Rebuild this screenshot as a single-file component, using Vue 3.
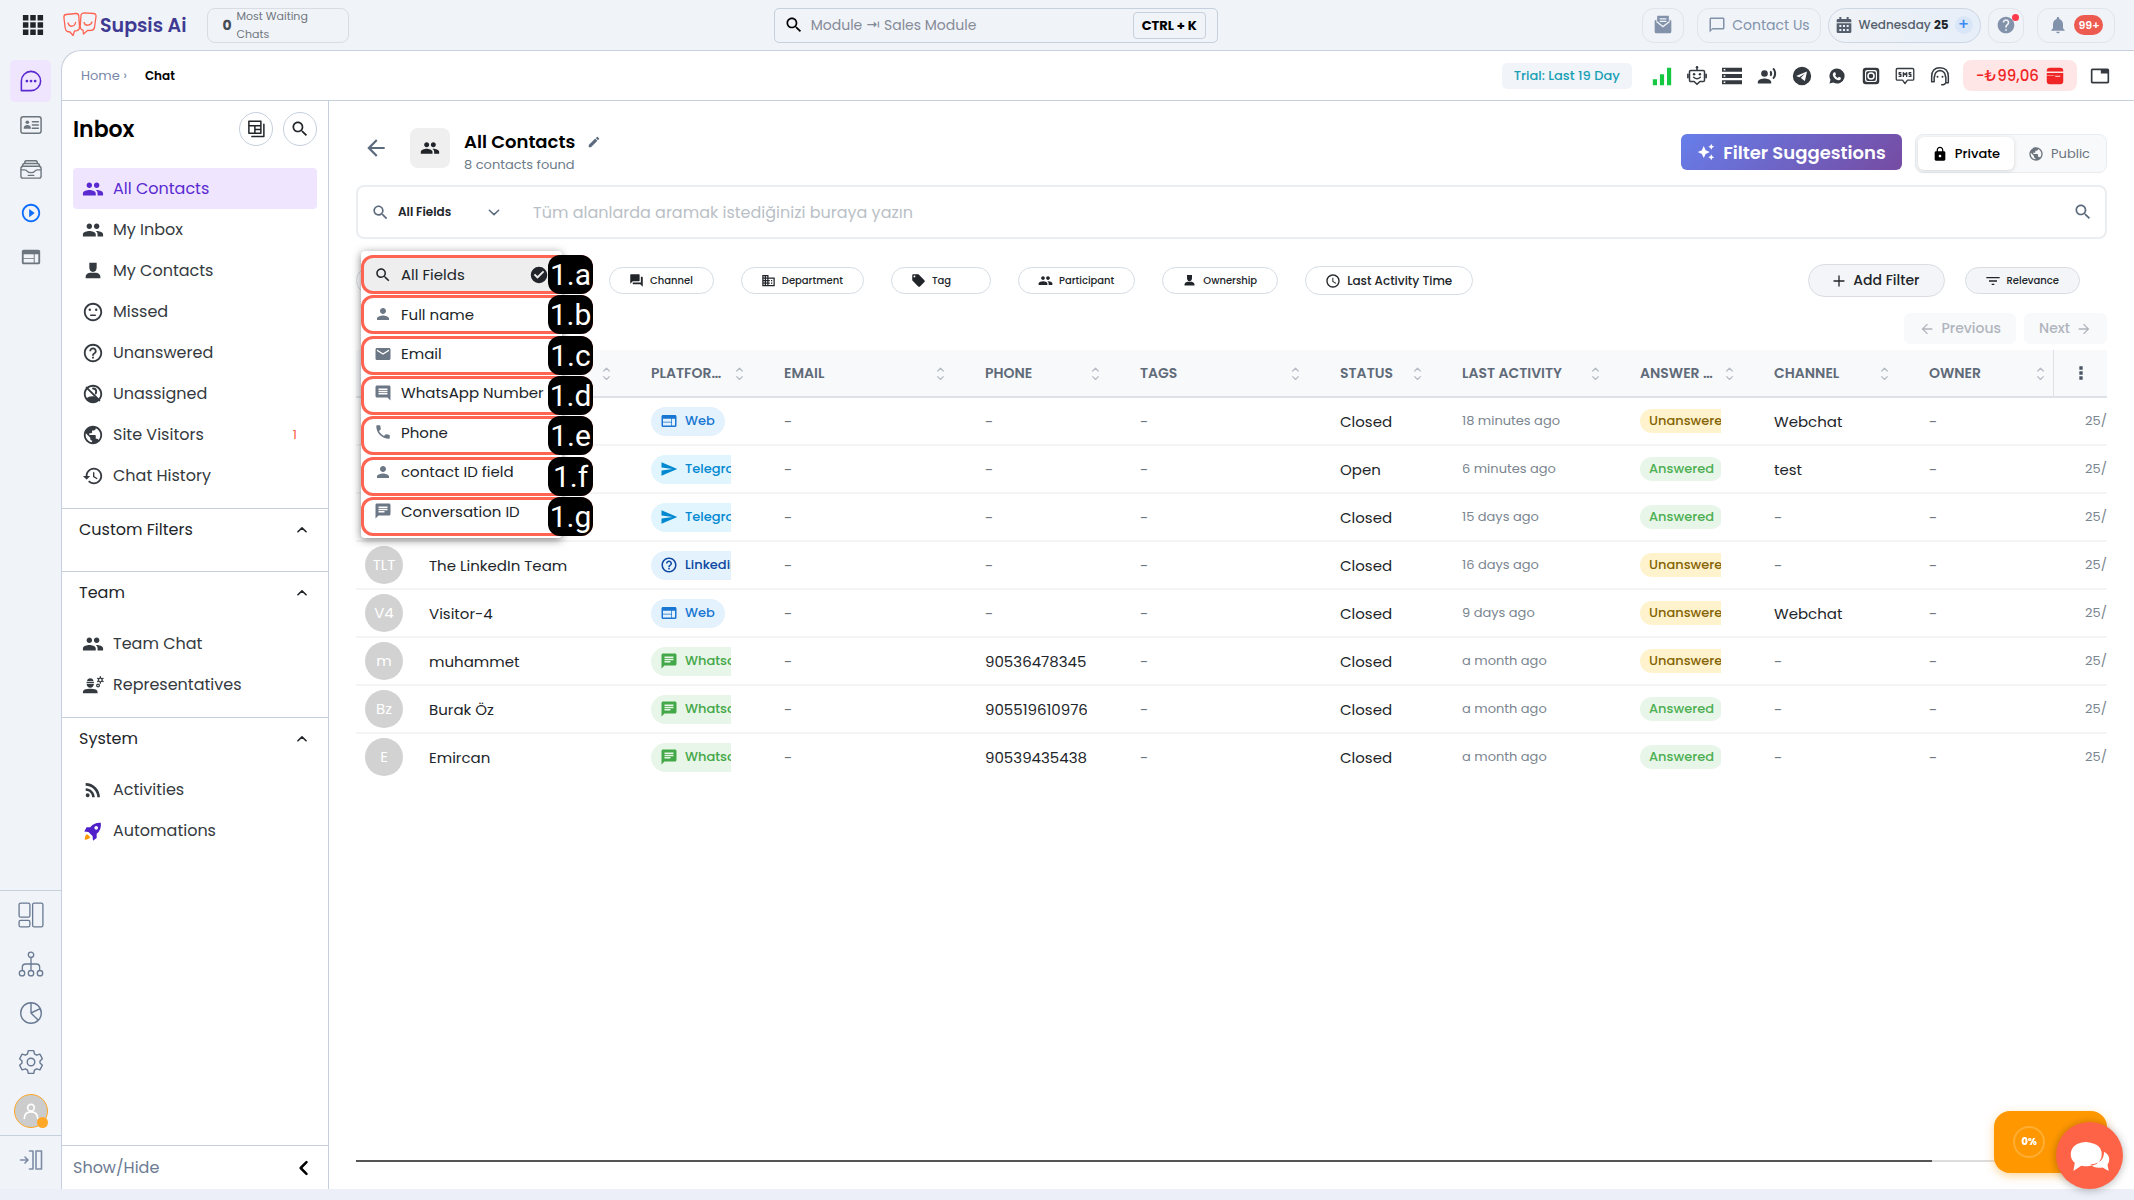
<template>
  <div class="app">
    <header class="topbar">
      <div class="brand">
        <button class="plain" aria-label="Apps"><Icon name="apps" :size="22" /></button>
        <a href="#" class="logo">
          <Icon name="logo" :size="34" box="0 0 34 26" />
          <span>Supsis Ai</span>
        </a>
        <div class="waiting">
          <strong>0</strong>
          <span>Most Waiting<br />Chats</span>
        </div>
      </div>

      <label class="module-search">
        <Icon name="search" :size="20" />
        <input type="text" placeholder="Module ⇥ Sales Module" aria-label="Module search" />
        <kbd>CTRL + K</kbd>
      </label>

      <div class="top-actions">
        <button class="top-btn mail" aria-label="Mail"><Icon name="drafts" :size="20" /></button>
        <button class="top-btn contact"><Icon name="bubble" :size="18" />Contact Us</button>
        <button class="top-btn day">
          <Icon name="calendar" :size="16" />
          <span>Wednesday <b>25</b></span>
          <i>+</i>
        </button>
        <button class="top-btn help" aria-label="Help"><Icon name="help" :size="20" /></button>
        <button class="top-btn bell">
          <Icon name="bell" :size="20" />
          <em>99+</em>
        </button>
      </div>
    </header>

    <div class="body">
      <nav class="rail">
        <div class="rail-top">
          <button
            v-for="item in railTop"
            :key="item.icon"
            class="rail-btn"
            :class="item.icon"
            :aria-label="item.label"
          >
            <Icon :name="item.icon" :size="22" />
          </button>
        </div>
        <div class="rail-bottom">
          <button v-for="item in railBottom" :key="item.icon" class="plain" :aria-label="item.label">
            <Icon :name="item.icon" :size="26" />
          </button>
          <button class="me" aria-label="Profile"><Icon name="user" :size="20" /></button>
        </div>
        <button class="rail-toggle" aria-label="Expand menu"><Icon name="expand" :size="24" /></button>
      </nav>

      <main class="panel">
        <div class="crumbs">
          <div class="path">
            <a href="#">Home ›</a>
            <b>Chat</b>
          </div>
          <div class="tools">
            <span class="trial">Trial: Last 19 Day</span>
            <button
              v-for="tool in tools"
              :key="tool"
              class="tool"
              :class="tool"
              :aria-label="tool"
            >
              <Icon :name="tool" :size="tool === 'instagram' ? 18 : 20" />
            </button>
            <button class="balance">-₺99,06 <Icon name="wallet" :size="18" /></button>
            <button class="tool" aria-label="Tab"><Icon name="tab" :size="20" /></button>
          </div>
        </div>

        <div class="columns">
          <aside class="sidebar">
            <div class="inbox-head">
              <h2>Inbox</h2>
              <button class="round" aria-label="Views"><Icon name="views" :size="18" /></button>
              <button class="round" aria-label="Search"><Icon name="search" :size="20" /></button>
            </div>
            <div class="links">
              <a
                v-for="link in inboxLinks"
                :key="link.label"
                href="#"
                class="link"
                :class="{ active: link.active }"
              >
                <Icon :name="link.icon" :size="22" />
                <span>{{ link.label }}</span>
                <small v-if="link.count">{{ link.count }}</small>
              </a>
            </div>
            <section v-for="group in groups" :key="group.title" class="group">
              <button class="group-title">
                {{ group.title }}
                <Icon name="up" :size="14" />
              </button>
              <div v-if="group.links.length" class="links">
                <a v-for="link in group.links" :key="link.label" href="#" class="link">
                  <Icon :name="link.icon" :size="22" />
                  <span>{{ link.label }}</span>
                </a>
              </div>
            </section>
            <button class="show-hide">
              Show/Hide
              <Icon name="left" :size="20" />
            </button>
          </aside>

          <section class="content">
            <div class="head">
              <button class="plain back" aria-label="Back"><Icon name="back" :size="26" /></button>
              <span class="head-icon"><Icon name="people" :size="20" /></span>
              <div class="head-text">
                <h1>All Contacts <Icon name="edit" :size="14" /></h1>
                <p>8 contacts found</p>
              </div>
              <div class="head-right">
                <button class="suggest"><Icon name="sparkle" :size="18" />Filter Suggestions</button>
                <div class="toggle">
                  <button class="on"><Icon name="lock" :size="16" />Private</button>
                  <button><Icon name="public" :size="16" />Public</button>
                </div>
              </div>
            </div>

            <div class="search-wrap">
              <div class="search">
                <button class="field-select" aria-haspopup="listbox" aria-expanded="true">
                  <Icon name="search" :size="19" />
                  <span>All Fields</span>
                  <Icon name="down" :size="14" />
                </button>
                <input
                  type="text"
                  aria-label="Search contacts"
                  placeholder="Tüm alanlarda aramak istediğinizi buraya yazın"
                />
                <button class="plain go" aria-label="Search"><Icon name="search" :size="20" /></button>
              </div>

              <ul class="menu" role="listbox">
                <li
                  v-for="(field, i) in fields"
                  :key="field.label"
                  role="option"
                  :class="{ chosen: i === 0 }"
                >
                  <Icon :name="field.icon" :size="18" />
                  <span>{{ field.label }}</span>
                  <Icon v-if="i === 0" name="check" :size="18" class="tick" />
                </li>
              </ul>
              <div class="marks">
                <div v-for="field in fields" :key="field.mark" class="mark">
                  <b>{{ field.mark }}</b>
                </div>
              </div>
            </div>

            <div class="filters">
              <button class="chip first" aria-label="Status"></button>
              <button v-for="chip in chips" :key="chip.label" class="chip" :class="chip.size">
                <Icon :name="chip.icon" :size="chip.size ? 16 : 15" />{{ chip.label }}
              </button>
              <button class="add"><Icon name="plus" :size="12" />Add Filter</button>
              <button class="chip relevance"><Icon name="filter" :size="16" />Relevance</button>
            </div>

            <div class="pager">
              <button disabled><Icon name="back" :size="16" />Previous</button>
              <button disabled>Next<Icon name="forward" :size="16" /></button>
            </div>

            <div class="table-wrap">
              <table>
                <colgroup>
                  <col v-for="col in columns" :key="col.key" :style="{ width: col.width + 'px' }" />
                </colgroup>
                <thead>
                  <tr>
                    <th v-for="col in columns" :key="col.key">
                      <div class="th">
                        <span>{{ col.label }}</span>
                        <Icon name="sort" :size="15" />
                      </div>
                    </th>
                  </tr>
                </thead>
                <tbody>
                  <tr v-for="(row, i) in rows" :key="i">
                    <td class="name">
                      <div v-if="row.name" class="person">
                        <span class="avatar">{{ row.initials }}</span>{{ row.name }}
                      </div>
                    </td>
                    <td>
                      <div class="cell">
                        <span class="platform" :class="row.platform">
                          <Icon :name="platforms[row.platform].icon" :size="18" />
                          {{ platforms[row.platform].label }}
                        </span>
                      </div>
                    </td>
                    <td class="dim">-</td>
                    <td :class="{ dim: !row.phone }">
                      <div class="cell">{{ row.phone || "-" }}</div>
                    </td>
                    <td class="dim">-</td>
                    <td>{{ row.status }}</td>
                    <td class="small">{{ row.last }}</td>
                    <td>
                      <div class="cell">
                        <span class="answer" :class="{ yes: row.answered }">
                          {{ row.answered ? "Answered" : "Unanswered" }}
                        </span>
                      </div>
                    </td>
                    <td :class="{ dim: !row.channel }">{{ row.channel || "-" }}</td>
                    <td class="dim">-</td>
                    <td class="small">25/</td>
                  </tr>
                </tbody>
              </table>
              <button class="col-menu" aria-label="Columns"><Icon name="more" :size="20" /></button>
            </div>

            <div class="scrollbar"><div></div></div>
          </section>
        </div>
      </main>
    </div>

    <div class="progress-card"><span>0%</span></div>
    <button class="chat-fab" aria-label="Live chat"><Icon name="chats" :size="42" /></button>
  </div>
</template>

<script setup>
import { h } from "vue";

const line = (d, w = 1.5) =>
  `<path fill="none" stroke="currentColor" stroke-width="${w}" stroke-linecap="round" stroke-linejoin="round" d="${d}"/>`;
const solid = (d) => `<path fill-rule="evenodd" d="${d}"/>`;

const ring =
  "M12 2C6.48 2 2 6.48 2 12s4.48 10 10 10 10-4.48 10-10S17.52 2 12 2zm0 18c-4.41 0-8-3.59-8-8s3.59-8 8-8 8 3.59 8 8-3.59 8-8 8z";

const icons = {
  apps: solid(
    "M1 1h6v6H1zM9 1h6v6H9zM17 1h6v6h-6zM1 9h6v6H1zM9 9h6v6H9zM17 9h6v6h-6zM1 17h6v6H1zM9 17h6v6H9zM17 17h6v6h-6z"
  ),
  logo: line(
    "M3 2.500L13 1.500Q15.500 1.300 15.800 4L16.500 15Q16.500 18 14 18.600L11.500 19L10 23.500L7 20L4.500 19.500Q2.700 19 2.200 16L.900 5.500Q.700 2.800 3 2.500zM18 3Q18.500.900 21 .800L30.500 1.500Q33.300 1.800 33 4.500L31.500 15.500Q31 18 28.500 18.300L24.500 18.500L20.500 22L20 18.200Q17.300 17.500 17.200 14.500zM5 11Q6 14.500 9 14.200Q12 13.800 12.600 10.500M21 10.500Q22 13.500 25 13.200Q28 12.800 29 10",
    1.3
  ),
  search: solid(
    "M15.500 14h-.79l-.28-.27C15.410 12.590 16 11.110 16 9.500 16 5.910 13.090 3 9.500 3S3 5.910 3 9.500 5.910 16 9.500 16c1.610 0 3.090-.59 4.230-1.570l.27.28v.79l5 4.990L20.490 19l-4.990-5zm-6 0C7.010 14 5 11.990 5 9.500S7.010 5 9.500 5 14 7.010 14 9.500 11.990 14 9.500 14z"
  ),
  drafts: solid(
    "M5 1h14v6.500L12 13 5 7.500zM8 4v1.500h8V4zm0 3v1.500h8V7zM2 7l2-1.500v3.200l8 6.300 8-6.300V5.500L22 7v13q0 2-2 2H4q-2 0-2-2z"
  ),
  bubble: solid("M20 2H4c-1.100 0-2 .9-2 2v18l4-4h14c1.100 0 2-.9 2-2V4c0-1.100-.9-2-2-2zm0 14H6l-2 2V4h16v12z"),
  calendar: solid(
    "M5 0h3v3h8V0h3v3h2q2 0 2 2v3H1V5q0-2 2-2h2zM1 9.500h22V22q0 2-2 2H3q-2 0-2-2zM5 12v3h3v-3zm5.500 0v3h3v-3zm5.500 0v3h3v-3zM5 18v3h3v-3zm5.500 0v3h3v-3zm5.500 0v3h3v-3z"
  ),
  help: solid(
    "M12 2C6.480 2 2 6.480 2 12s4.480 10 10 10 10-4.480 10-10S17.520 2 12 2zm1 17h-2v-2h2v2zm2.070-7.750l-.9.920C13.450 12.900 13 13.500 13 15h-2v-.5c0-1.100.45-2.100 1.170-2.830l1.240-1.260c.37-.36.59-.86.59-1.410 0-1.100-.9-2-2-2s-2 .9-2 2H8c0-2.210 1.790-4 4-4s4 1.790 4 4c0 .88-.36 1.680-.93 2.250z"
  ),
  bell: solid(
    "M12 22c1.100 0 2-.9 2-2h-4c0 1.100.89 2 2 2zm6-6v-5c0-3.070-1.640-5.640-4.500-6.320V4c0-.83-.67-1.500-1.500-1.500s-1.500.67-1.500 1.500v.68C7.630 5.360 6 7.920 6 11v5l-2 2v1h16v-1l-2-2z"
  ),
  chat: line("M1.500 22.500V12A10.500 10.500 0 1 1 12 22.500z", 1.7) +
    '<circle cx="7.500" cy="12" r="1.500"/><circle cx="12" cy="12" r="1.500"/><circle cx="16.500" cy="12" r="1.500"/>',
  card: line("M3.500 3h17q2.500 0 2.500 2.500v13q0 2.500-2.500 2.500h-17Q1 21 1 18.500v-13Q1 3 3.500 3zM13.500 8.500H20M13.500 12H20M13.500 15.500H20", 1.6) +
    '<circle cx="8" cy="9" r="2"/><path d="M4 16q0-4 4-4t4 4z"/>',
  inbox: line("M3.500 9h17q2.500 0 2.500 2.500v8q0 2.500-2.500 2.500h-17Q1 22 1 19.500v-8Q1 9 3.500 9zM2.500 9Q3 6 5 6h14q2 0 2.500 3M5 6q0-3 2-3h10q2 0 2 3M1.500 13H5q2 0 3 1.500T12 16t4-1.500 3-1.500h3.500M9 19h6", 1.5),
  play: solid("M10 16.500l6-4.500-6-4.500v9z" + ring),
  web: solid(
    "M20 4H4c-1.100 0-1.990.9-1.990 2L2 18c0 1.100.9 2 2 2h16c1.100 0 2-.9 2-2V6c0-1.100-.9-2-2-2zm-5 14H4v-4h11v4zm0-5H4V9h11v4zm5 5h-4V9h4v9z"
  ),
  dashboard: line("M2.500 1h7q1.500 0 1.500 1.500v10q0 1.500-1.500 1.500h-7Q1 14 1 12.500v-10Q1 1 2.500 1zM2.500 17h7q1.500 0 1.500 1.500v3q0 1.500-1.500 1.500h-7Q1 23 1 21.500v-3Q1 17 2.500 17zM15 1h6.500Q23 1 23 2.500v19q0 1.500-1.500 1.500H15q-1.500 0-1.500-1.500v-19Q13.500 1 15 1z", 1.2),
  org: line("M12 6v12M4 17.500V15q0-3 3-3h10q3 0 3 3v2.500M9.500 3.500a2.500 2.500 0 1 0 5 0a2.500 2.500 0 1 0-5 0M9.500 20.500a2.500 2.500 0 1 0 5 0a2.500 2.500 0 1 0-5 0M1.200 20.500a2.500 2.500 0 1 0 5 0a2.500 2.500 0 1 0-5 0M17.800 20.500a2.500 2.500 0 1 0 5 0a2.500 2.500 0 1 0-5 0", 1.2),
  pie: line("M2.500 12a9.500 9.500 0 1 0 19 0a9.500 9.500 0 1 0-19 0M12 2.500V12L20.500 8M12 12l6.500 6.500", 1.3),
  gear: line("M8.500 12a3.500 3.500 0 1 0 7 0a3.500 3.500 0 1 0-7 0M9.500 1.500h5l.7 3 2 1.200 3-.9 2.300 4.200-2.200 2v2l2.200 2-2.300 4.200-3-.9-2 1.200-.7 3h-5l-.7-3-2-1.200-3 .9L1.500 15l2.200-2v-2L1.500 9l2.300-4.200 3 .9 2-1.200z", 1.3),
  user: line("M8 8a4 4 0 1 0 8 0a4 4 0 1 0-8 0M4 21q0-8 8-8t8 8", 2),
  expand: line("M1.500 12h7M6 9l3 3-3 3M10.500 3H14v18h-3.500M17 3h5.500v18H17z", 1.6),
  bars: solid("M1 16h5v7H1zM9.500 10h5v13h-5zM18 2h5v21h-5z"),
  bot: line("M4.500 5.500h15q1.500 0 1.500 1.500v10q0 1.500-1.500 1.500h-4L12 22l-3.500-3.500h-4Q3 18.500 3 17V7q0-1.500 1.500-1.500zM12 5V1.500M1 10v4M23 10v4M8 13.500q4 3.500 8 0", 1.8) +
    '<circle cx="8.500" cy="10" r="1.500"/><circle cx="15.500" cy="10" r="1.500"/><circle cx="12" cy="1.500" r="1.500"/>',
  servers: solid(
    "M0 2h24v5H0zM2 3.500v2h2v-2zM0 9.500h24v5H0zM2 11v2h2v-2zM0 17h24v5H0zM2 18.500v2h2v-2z"
  ),
  voice: solid(
    "M5 9a4 4 0 1 0 8 0a4 4 0 1 0-8 0zM9 15c-2.670 0-8 1.340-8 4v2h16v-2c0-2.660-5.330-4-8-4zm7.760-9.640l-1.680 1.690c.84 1.180.84 2.710 0 3.890l1.680 1.690c2.020-2.020 2.020-5.070 0-7.270zM20.070 2l-1.630 1.630c2.770 3.020 2.770 7.560 0 10.740L20.070 16c3.900-3.890 3.910-9.950 0-14z"
  ),
  telegram: solid("M12 1a11 11 0 1 0 0 22a11 11 0 1 0 0-22zM18 6.500L5 12l3.800 1.500L15.500 9l-5 5.500 5 3.500z"),
  whatsapp: solid(
    "M12 3a9 9 0 0 0-7.800 13.500L3 21l4.600-1.200A9 9 0 1 0 12 3zM8.500 7.500l1.300.1 1 2.400-1 1.300q1 2 3.200 3l1.200-1.300 2.400 1.200v1.300q-.9 1.800-3.200 1.600-5.400-1.300-6.500-6.500Q6.900 8.500 8.500 7.500z"
  ),
  instagram: solid(
    "M5 1h14q4 0 4 4v14q0 4-4 4H5q-4 0-4-4V5q0-4 4-4zM7 4Q4 4 4 7v10q0 3 3 3h10q3 0 3-3V7q0-3-3-3zM8 5.500h8q2.500 0 2.500 2.500v8q0 2.500-2.500 2.500H8Q5.500 18.500 5.500 16V8Q5.500 5.500 8 5.500zM12 7a5 5 0 1 0 0 10a5 5 0 1 0 0-10zM12 9a3 3 0 1 1 0 6a3 3 0 1 1 0-6z"
  ),
  sms: line("M3 3h18q1.500 0 1.500 1.500v11Q22.500 17 21 17h-6l-3 4-3-4H3q-1.500 0-1.500-1.500v-11Q1.500 3 3 3zM7 8H5v2h2v2.500H5M10 12.500V8l2 2.500L14 8v4.500M19 8h-2v2h2v2.500h-2", 1.6),
  headset: line("M2 19v-6Q2 2 12 2t10 11v6M5.500 13q0-6.500 6.500-7.500 6.500 1 6.500 7.500M5 13v6H2v-6M19 13v7h3v-7M19 20q-1 2.500-5 2.500", 1.8) +
    '<circle cx="9" cy="13" r="1.200"/><circle cx="15" cy="13" r="1.200"/>',
  wallet: solid("M5 1h14q4 0 4 4v1H1V5q0-4 4-4zM1 8h22v11q0 4-4 4H5q-4 0-4-4v-8h9l3 2h6v-1.500H1z"),
  tab: solid(
    "M21 3H3c-1.100 0-2 .9-2 2v14c0 1.100.9 2 2 2h18c1.100 0 2-.9 2-2V5c0-1.100-.9-2-2-2zm0 16H3V5h10v4h8v10z"
  ),
  views: line("M2.500 1.500h16v16h-16zM2.500 7.500h16M10.500 7.500v10M10.500 12.500h8M22.500 5.500v16.500H6.500", 2),
  people: solid(
    "M16 11c1.660 0 2.990-1.340 2.990-3S17.660 5 16 5c-1.660 0-3 1.340-3 3s1.340 3 3 3zm-8 0c1.660 0 2.990-1.340 2.990-3S9.660 5 8 5C6.340 5 5 6.340 5 8s1.340 3 3 3zm0 2c-2.330 0-7 1.170-7 3.500V19h14v-2.500c0-2.330-4.670-3.500-7-3.500zm8 0c-.29 0-.62.02-.97.05 1.160.84 1.970 1.970 1.970 3.450V19h6v-2.500c0-2.330-4.670-3.500-7-3.500z"
  ),
  person: solid(
    "M12 12c2.210 0 4-1.790 4-4s-1.790-4-4-4-4 1.790-4 4 1.790 4 4 4zm0 2c-2.670 0-8 1.340-8 4v2h16v-2c0-2.660-5.330-4-8-4z"
  ),
  bust: solid("M8 3h8v5q0 5-4 5T8 8zM4 20v-2q0-3 4.500-4h7q4.500 1 4.500 4v2z"),
  missed: solid(ring) + '<circle cx="8.500" cy="9.500" r="1.300"/><circle cx="15.500" cy="9.500" r="1.300"/>' + line("M9.500 15.500h5", 1.6),
  question: solid(
    ring + "M11 18h2v-2h-2v2zm1-12c-2.210 0-4 1.790-4 4h2c0-1.100.9-2 2-2s2 .9 2 2c0 2-3 1.750-3 5h2c0-2.250 3-2.500 3-5 0-2.210-1.790-4-4-4z"
  ),
  unassigned: solid(ring) + line("M5 5l14 14M12 6q3.500 0 3.500 3.500l-.5 2", 2) + '<path d="M4.500 17q3-3 8.500-2.500l6 3.500q-3 3.500-7 3.500t-7.500-4.500z"/>',
  public: solid(
    "M12 2C6.480 2 2 6.480 2 12s4.480 10 10 10 10-4.480 10-10S17.520 2 12 2zm-1 17.930c-3.950-.49-7-3.850-7-7.930 0-.62.08-1.210.21-1.790L9 15v1c0 1.100.9 2 2 2v1.930zm6.900-2.540c-.26-.81-1-1.390-1.900-1.390h-1v-3c0-.55-.45-1-1-1H8v-2h2c.55 0 1-.45 1-1V7h2c1.100 0 2-.9 2-2v-.41c2.930 1.190 5 4.060 5 7.410 0 2.080-.8 3.970-2.100 5.390z"
  ),
  history: solid(
    "M13 3c-4.970 0-9 4.030-9 9H1l3.890 3.890.07.14L9 12H6c0-3.870 3.130-7 7-7s7 3.130 7 7-3.130 7-7 7c-1.930 0-3.680-.79-4.940-2.060l-1.420 1.420C8.270 19.990 10.510 21 13 21c4.970 0 9-4.030 9-9s-4.030-9-9-9zm-1 5v5l4.280 2.540.72-1.210-3.500-2.080V8H12z"
  ),
  engineer: solid("M1 21v-1.500Q1 16 9 16t8 3.500V21zM5 8.500h8V10H5zM5.500 7.500Q6 4.500 9 4.500t3.500 3zM5 11h8q-.5 4-4 4t-4-4z") +
    line("M18 6.500a2 2 0 1 0 4 0a2 2 0 1 0-4 0M16 12.500a1.500 1.500 0 1 0 3 0a1.500 1.500 0 1 0-3 0M20 3v1M20 9v1M17 4.700l.8.600M23 4.700l-.8.600M17 8.300l.8-.6M23 8.300l-.8-.6", 1.4),
  rss: solid(
    "M4 17.820a2.180 2.180 0 1 0 4.360 0a2.180 2.180 0 1 0-4.360 0zM4 4.440v2.830c7.030 0 12.730 5.700 12.730 12.730h2.830c0-8.590-6.970-15.560-15.560-15.560zm0 5.660v2.830c3.900 0 7.070 3.170 7.070 7.070h2.830c0-5.470-4.430-9.900-9.900-9.900z"
  ),
  rocket:
    '<path fill="#4f1fc9" fill-rule="evenodd" d="M20.500 3Q13 2.500 9 8H5l-2.500 4.500 4.500.5 4.500 4.500.5 5 4-3v-4.500Q21.500 11 20.500 3zM15.500 6.500a2 2 0 1 1 0 4a2 2 0 1 1 0-4z"/><path fill="#ff9800" d="M5.500 15.500Q3 17 3 21.500q4.500 0 6-3z"/>',
  up: line("M5 15l7-6.500 7 6.500", 2.8),
  down: line("M4 9l8 7.500L20 9", 2.6),
  left: line("M15 5l-7 7 7 7", 3),
  back: solid("M20 11H7.830l5.590-5.590L12 4l-8 8 8 8 1.410-1.410L7.830 13H20v-2z"),
  forward: solid("M12 4l-1.410 1.410L16.170 11H4v2h12.170l-5.580 5.590L12 20l8-8z"),
  edit: solid(
    "M3 17.250V21h3.750L17.810 9.940l-3.750-3.750L3 17.250zM20.710 7.040c.39-.39.39-1.020 0-1.410l-2.340-2.340c-.39-.39-1.020-.39-1.410 0l-1.830 1.830 3.750 3.750 1.830-1.830z"
  ),
  sparkle: solid(
    "M19 9l1.250-2.750L23 5l-2.750-1.250L19 1l-1.250 2.750L15 5l2.750 1.250L19 9zm-7.500.5L9 4 6.500 9.500 1 12l5.500 2.500L9 20l2.500-5.500L17 12l-5.500-2.500zM19 15l-1.250 2.750L15 19l2.750 1.250L19 23l1.250-2.750L23 19l-2.750-1.250L19 15z"
  ),
  lock: solid(
    "M18 8h-1V6c0-2.760-2.240-5-5-5S7 3.240 7 6v2H6c-1.100 0-2 .9-2 2v10c0 1.100.9 2 2 2h12c1.100 0 2-.9 2-2V10c0-1.100-.9-2-2-2zm-6 9c-1.100 0-2-.9-2-2s.9-2 2-2 2 .9 2 2-.9 2-2 2zm3.100-9H8.900V6c0-1.710 1.390-3.100 3.100-3.100 1.710 0 3.100 1.390 3.100 3.100v2z"
  ),
  mail: solid(
    "M20 4H4c-1.100 0-1.990.9-1.990 2L2 18c0 1.100.9 2 2 2h16c1.100 0 2-.9 2-2V6c0-1.100-.9-2-2-2zm0 4l-8 5-8-5V6l8 5 8-5v2z"
  ),
  comment: solid(
    "M21.990 4c0-1.100-.89-2-1.990-2H4c-1.100 0-2 .9-2 2v12c0 1.100.9 2 2 2h14l4 4-.01-18zM18 14H6v-2h12v2zm0-3H6V9h12v2zm0-3H6V6h12v2z"
  ),
  phone: solid(
    "M6.620 10.790c1.440 2.830 3.760 5.140 6.590 6.590l2.200-2.200c.27-.27.67-.36 1.020-.24 1.120.37 2.330.57 3.570.57.55 0 1 .45 1 1V20c0 .55-.45 1-1 1-9.390 0-17-7.610-17-17 0-.55.45-1 1-1h3.500c.55 0 1 .45 1 1 0 1.250.2 2.450.57 3.570.11.35.03.74-.25 1.020l-2.200 2.200z"
  ),
  message: solid(
    "M20 2H4c-1.100 0-1.990.9-1.990 2L2 22l4-4h14c1.100 0 2-.9 2-2V4c0-1.100-.9-2-2-2zM6 9h12v2H6V9zm8 5H6v-2h8v2zm4-6H6V6h12v2z"
  ),
  check: solid(
    "M12 1a11 11 0 1 0 0 22a11 11 0 1 0 0-22zm-2 16l-5-5 1.800-1.800L10 13.400l7.200-7.200L19 8l-9 9z"
  ),
  channel: solid(
    "M21 6h-2v9H6v2c0 .55.45 1 1 1h11l4 4V7c0-.55-.45-1-1-1zm-4 6V3c0-.55-.45-1-1-1H3c-.55 0-1 .45-1 1v14l4-4h10c.55 0 1-.45 1-1z"
  ),
  business: solid(
    "M12 7V3H2v18h20V7H12zM6 19H4v-2h2v2zm0-4H4v-2h2v2zm0-4H4V9h2v2zm0-4H4V5h2v2zm4 12H8v-2h2v2zm0-4H8v-2h2v2zm0-4H8V9h2v2zm0-4H8V5h2v2zm10 12h-8v-2h2v-2h-2v-2h2v-2h-2V9h8v10zm-2-8h-2v2h2v-2zm0 4h-2v2h2v-2z"
  ),
  tag: solid(
    "M21.410 11.580l-9-9C12.050 2.220 11.550 2 11 2H4c-1.100 0-2 .9-2 2v7c0 .55.22 1.050.59 1.420l9 9c.36.36.86.58 1.410.58.55 0 1.050-.22 1.410-.59l7-7c.37-.36.59-.86.59-1.410 0-.55-.23-1.060-.59-1.420zM5.500 7C4.670 7 4 6.330 4 5.500S4.670 4 5.500 4 7 4.670 7 5.500 6.330 7 5.500 7z"
  ),
  clock: solid(ring + "M12.500 7H11v6l5.250 3.150.75-1.230-4.500-2.670z"),
  plus: line("M12 2v20M2 12h20", 2.6),
  filter: solid("M10 18h4v-2h-4v2zM2 6v2h20V6H2zm4 7h12v-2H6v2z"),
  sort: line("M7.500 8L12 3.500 16.500 8M7.500 17l4.500 4.500 4.500-4.500", 2),
  more: solid("M10 4h4v4h-4zM10 10h4v4h-4zM10 16h4v4h-4z"),
  send: solid("M2.010 21L23 12 2.010 3 2 10l15 2-15 2z"),
  chats: solid(
    "M10 4C4.500 4 1 7 1 11q0 3 2.300 5L2.500 20.500 7 17.500q9.500 1.500 11.500-4.500Q20 5 10 4zM20 9.500q3 1.500 3 4.500 0 1.700-1 3l.7 3.500-3.500-2q-4.500.8-7-1.700 8-.8 7.800-7.300z"
  ),
};

const Icon = ({ name, size, box }) =>
  h("svg", {
    viewBox: box || "0 0 24 24",
    width: size,
    height: size,
    fill: "currentColor",
    "aria-hidden": "true",
    innerHTML: icons[name],
  });
Icon.props = ["name", "size", "box"];

const railTop = [
  { icon: "chat", label: "Chat" },
  { icon: "card", label: "Contacts" },
  { icon: "inbox", label: "Inbox" },
  { icon: "play", label: "Play" },
  { icon: "web", label: "Web" },
];

const railBottom = [
  { icon: "dashboard", label: "Dashboard" },
  { icon: "org", label: "Organization" },
  { icon: "pie", label: "Reports" },
  { icon: "gear", label: "Settings" },
];

const tools = ["bars", "bot", "servers", "voice", "telegram", "whatsapp", "instagram", "sms", "headset"];

const inboxLinks = [
  { icon: "people", label: "All Contacts", active: true },
  { icon: "people", label: "My Inbox" },
  { icon: "bust", label: "My Contacts" },
  { icon: "missed", label: "Missed" },
  { icon: "question", label: "Unanswered" },
  { icon: "unassigned", label: "Unassigned" },
  { icon: "public", label: "Site Visitors", count: 1 },
  { icon: "history", label: "Chat History" },
];

const groups = [
  { title: "Custom Filters", links: [] },
  {
    title: "Team",
    links: [
      { icon: "people", label: "Team Chat" },
      { icon: "engineer", label: "Representatives" },
    ],
  },
  {
    title: "System",
    links: [
      { icon: "rss", label: "Activities" },
      { icon: "rocket", label: "Automations" },
    ],
  },
];

const fields = [
  { icon: "search", label: "All Fields", mark: "1.a" },
  { icon: "person", label: "Full name", mark: "1.b" },
  { icon: "mail", label: "Email", mark: "1.c" },
  { icon: "comment", label: "WhatsApp Number", mark: "1.d" },
  { icon: "phone", label: "Phone", mark: "1.e" },
  { icon: "person", label: "contact ID field", mark: "1.f" },
  { icon: "message", label: "Conversation ID", mark: "1.g" },
];

const chips = [
  { icon: "channel", label: "Channel" },
  { icon: "business", label: "Department" },
  { icon: "tag", label: "Tag" },
  { icon: "people", label: "Participant" },
  { icon: "bust", label: "Ownership" },
  { icon: "clock", label: "Last Activity Time", size: "large" },
];

const columns = [
  { key: "name", label: "", width: 268 },
  { key: "platform", label: "PLATFOR…", width: 133 },
  { key: "email", label: "EMAIL", width: 201 },
  { key: "phone", label: "PHONE", width: 155 },
  { key: "tags", label: "TAGS", width: 200 },
  { key: "status", label: "STATUS", width: 122 },
  { key: "last", label: "LAST ACTIVITY", width: 178 },
  { key: "answer", label: "ANSWER …", width: 134 },
  { key: "channel", label: "CHANNEL", width: 155 },
  { key: "owner", label: "OWNER", width: 156 },
  { key: "date", label: "", width: 120 },
];

const platforms = {
  web: { icon: "web", label: "Web" },
  telegram: { icon: "send", label: "Telegram" },
  linkedin: { icon: "question", label: "Linkedin" },
  whatsapp: { icon: "message", label: "Whatsapp" },
};

const rows = [
  { platform: "web", status: "Closed", last: "18 minutes ago", channel: "Webchat" },
  { platform: "telegram", status: "Open", last: "6 minutes ago", answered: true, channel: "test" },
  { platform: "telegram", status: "Closed", last: "15 days ago", answered: true },
  { initials: "TLT", name: "The LinkedIn Team", platform: "linkedin", status: "Closed", last: "16 days ago" },
  { initials: "V4", name: "Visitor-4", platform: "web", status: "Closed", last: "9 days ago", channel: "Webchat" },
  { initials: "m", name: "muhammet", platform: "whatsapp", phone: "90536478345", status: "Closed", last: "a month ago" },
  { initials: "Bz", name: "Burak Öz", platform: "whatsapp", phone: "905519610976", status: "Closed", last: "a month ago", answered: true },
  { initials: "E", name: "Emircan", platform: "whatsapp", phone: "90539435438", status: "Closed", last: "a month ago", answered: true },
];
</script>

<style>
body {
  background: #eceff8;
}
</style>

<style scoped>
.app {
  display: flex;
  flex-direction: column;
  min-height: 100vh;
  box-sizing: border-box;
  border-bottom: 11px solid #eceff8;
  background: #f0f3f7;
  color: #212529;
  font-family: Poppins, Inter, sans-serif;
  font-size: 16px;
}

.app * {
  box-sizing: border-box;
}

svg {
  flex: none;
  display: block;
}

button,
input {
  font: inherit;
  color: inherit;
  background: none;
  border: 0;
  padding: 0;
  outline: none;
}

button {
  display: flex;
  align-items: center;
  cursor: pointer;
  white-space: nowrap;
}

a {
  text-decoration: none;
  color: inherit;
}

h1,
h2,
p,
ul {
  margin: 0;
  padding: 0;
}

/* Top bar */
.topbar {
  display: flex;
  align-items: center;
  justify-content: space-between;
  height: 50px;
  padding: 0 19px 0 22px;
}

.brand {
  display: flex;
  align-items: center;
}

.logo {
  display: flex;
  align-items: center;
  gap: 3px;
  margin: 0 21px 0 19px;
  color: #3f3a93;
  font-size: 19px;
  font-weight: 600;
}

.logo svg {
  color: #ff6352;
}

.waiting {
  display: flex;
  align-items: center;
  gap: 5px;
  width: 142px;
  height: 35px;
  padding-left: 14px;
  border: 1px solid #d9dde3;
  border-radius: 8px;
  color: #6f7680;
  font-size: 11px;
  line-height: 18px;
}

.waiting strong {
  color: #454c56;
  font-size: 14px;
}

.module-search {
  display: flex;
  align-items: center;
  width: 444px;
  height: 35px;
  padding: 0 11px 0 9px;
  border: 1px solid #c5d0dc;
  border-radius: 5px;
  color: #000;
}

.module-search input {
  flex: 1;
  min-width: 0;
  margin-left: 7px;
  font-size: 14px;
}

.module-search input::placeholder {
  color: #858b98;
}

kbd {
  height: 27px;
  padding: 0 8px;
  border: 1px solid #c5d0dc;
  border-radius: 4px;
  font: bold 13px/25px Poppins, Inter, sans-serif;
}

.top-actions {
  display: flex;
}

.top-btn {
  justify-content: center;
  height: 35px;
  border: 1px solid #e0e5ec;
  border-radius: 12px;
  color: #8292ab;
  font-size: 14px;
}

.mail {
  width: 42px;
  margin-right: 13px;
}

.contact {
  gap: 6px;
  width: 124px;
  margin-right: 7px;
}

.day {
  gap: 6px;
  width: 153px;
  margin-right: 7px;
  border-color: #ccd6e3;
  border-radius: 18px;
  background: linear-gradient(90deg, #f0f3f7, #e6eef9);
  color: #555f6d;
  font-size: 12px;
  font-weight: 500;
}

.day b {
  color: #212529;
}

.day i {
  width: 18px;
  height: 18px;
  border-radius: 50%;
  background: #d9e6f7;
  color: #3d8bf2;
  font-size: 16px;
  font-style: normal;
  line-height: 18px;
}

.help {
  position: relative;
  width: 36px;
  margin-right: 13px;
}

.help::after {
  content: "";
  position: absolute;
  top: 5px;
  right: 4px;
  width: 7px;
  height: 7px;
  border-radius: 50%;
  background: #ff3b4e;
}

.bell {
  gap: 6px;
  width: 78px;
}

.bell em {
  width: 29px;
  border-radius: 10px;
  background: #ec5a50;
  color: #fff;
  font-size: 11px;
  font-style: normal;
  font-weight: 600;
  line-height: 20px;
  text-align: center;
}

/* Left rail */
.body {
  display: flex;
  flex: 1;
}

.rail {
  display: flex;
  flex-direction: column;
  width: 61px;
  color: #687993;
}

.rail-top {
  display: flex;
  flex: 1;
  flex-direction: column;
  gap: 2px;
  padding: 10px 0 0 10px;
}

.rail-btn {
  justify-content: center;
  width: 41px;
  height: 42px;
  border-radius: 5px;
  color: #6c757d;
}

.rail-btn.chat {
  background: #efe5ff;
  color: #5a2ad0;
}

.rail-btn.play {
  color: #0d6efd;
}

.rail-bottom {
  display: flex;
  flex-direction: column;
  align-items: center;
  gap: 23px;
  padding: 11px 0 7px;
  border-top: 1px solid #c5d0dc;
  border-bottom: 1px solid #c5d0dc;
}

.me {
  position: relative;
  justify-content: center;
  width: 34px;
  height: 34px;
  margin-top: -4px;
  border: 1px solid #ffa726;
  border-radius: 50%;
  background: #ccc;
  color: #fff;
}

.me::after {
  content: "";
  position: absolute;
  right: -1px;
  bottom: -1px;
  width: 11px;
  height: 11px;
  border-radius: 50%;
  background: #ffa726;
}

.rail-toggle {
  justify-content: center;
  height: 53px;
  padding-bottom: 6px;
  color: #7d8ca5;
}

/* Panel */
.panel {
  display: flex;
  flex: 1;
  flex-direction: column;
  min-width: 0;
  border: solid #c5d0dc;
  border-width: 1px 0 0 1px;
  border-radius: 20px 0 0 0;
  background: #fff;
}

.crumbs {
  display: flex;
  align-items: center;
  justify-content: space-between;
  height: 50px;
  padding: 0 24px 0 19px;
  border-bottom: 1px solid #c5d0dc;
}

.path {
  display: flex;
  align-items: center;
  gap: 18px;
  font-size: 13px;
}

.path a {
  color: #7787a8;
}

.path b {
  color: #000;
  font-size: 12px;
  font-weight: 600;
}

.tools {
  display: flex;
  align-items: center;
  gap: 15px;
}

.trial {
  margin-right: 5px;
  padding: 0 12px;
  border-radius: 5px;
  background: #f1f5f9;
  color: #1aa0b5;
  font-size: 13px;
  font-weight: 500;
  line-height: 26px;
}

.tool {
  color: #343a40;
}

.bars {
  color: #14c941;
}

.balance {
  gap: 7px;
  height: 31px;
  margin: 0 -2px;
  padding: 0 13px;
  border-radius: 8px;
  background: #ffe6e6;
  color: #f02626;
  font-size: 15px;
  font-weight: 500;
}

.columns {
  display: flex;
  flex: 1;
}

/* Sidebar */
.sidebar {
  display: flex;
  flex: none;
  flex-direction: column;
  width: 267px;
  border-right: 1px solid #c5d0dc;
}

.inbox-head {
  display: flex;
  align-items: center;
  gap: 10px;
  padding: 11px 11px 22px;
}

.inbox-head h2 {
  flex: 1;
  color: #000;
  font-size: 22px;
  font-weight: 600;
}

.round {
  justify-content: center;
  width: 34px;
  height: 34px;
  border: 1px solid #c5d0dc;
  border-radius: 50%;
}

.links {
  display: flex;
  flex-direction: column;
  padding: 0 11px;
}

.inbox-head + .links {
  padding-bottom: 12px;
}

.link {
  display: flex;
  align-items: center;
  gap: 9px;
  height: 41px;
  padding: 0 20px 0 9px;
  border-radius: 4px;
  color: #343a40;
}

.link.active {
  background: #efe5ff;
  color: #5a2ad0;
}

.link span {
  flex: 1;
}

.link small {
  color: #ff5a43;
  font-size: 13px;
}

.group {
  min-height: 63px;
  border-top: 1px solid #c5d0dc;
}

.group-title {
  justify-content: space-between;
  width: 100%;
  height: 41px;
  padding: 0 19px 0 17px;
}

.group .links {
  padding-top: 10px;
  padding-bottom: 12px;
}

.show-hide {
  justify-content: space-between;
  height: 44px;
  margin-top: auto;
  padding: 0 14px 0 11px;
  border-top: 1px solid #c5d0dc;
  color: #6c7b93;
}

.show-hide svg {
  color: #000;
}

/* Content */
.content {
  display: flex;
  flex: 1;
  flex-direction: column;
  min-width: 0;
  padding: 27px;
}

.head {
  display: flex;
  align-items: flex-start;
  height: 45px;
}

.back {
  height: 40px;
  margin: 0 21px 0 7px;
  color: #5b6b7d;
}

.head-icon {
  display: flex;
  align-items: center;
  justify-content: center;
  width: 40px;
  height: 40px;
  margin-right: 14px;
  border-radius: 8px;
  background: #efefef;
}

.head-text h1 {
  display: flex;
  align-items: center;
  gap: 12px;
  color: #000;
  font-size: 18px;
  font-weight: 600;
  line-height: 28px;
}

.head-text h1 svg {
  color: #5b6b7d;
}

.head-text p {
  color: #6c7b88;
  font-size: 13px;
  line-height: 18px;
}

.head-right {
  display: flex;
  align-items: flex-start;
  gap: 13px;
  margin: 6px 0 0 auto;
}

.suggest {
  gap: 8px;
  height: 36px;
  padding: 0 16px;
  border-radius: 6px;
  background: linear-gradient(135deg, #667eea, #764ba2);
  color: #fff;
  font-size: 18px;
  font-weight: 600;
}

.toggle {
  display: flex;
  height: 39px;
  padding: 2px;
  border: 1px solid #e9ecef;
  border-radius: 8px;
  background: #f8f9fb;
}

.toggle button {
  gap: 7px;
  padding: 0 14px;
  border-radius: 6px;
  color: #6c757d;
  font-size: 13px;
}

.toggle .on {
  background: #fff;
  box-shadow: 0 1px 4px rgba(0, 0, 0, 0.15);
  color: #000;
  font-weight: 500;
}

.search-wrap {
  position: relative;
  margin-top: 12px;
}

.search {
  display: flex;
  align-items: center;
  height: 54px;
  border: 2px solid #ebeef1;
  border-radius: 8px;
}

.field-select {
  width: 175px;
  padding-left: 13px;
  color: #5b6b7d;
}

.field-select span {
  width: 89px;
  margin-left: 8px;
  color: #212529;
  font-size: 12px;
  font-weight: 600;
  text-align: left;
}

.search input {
  flex: 1;
  min-width: 0;
}

.search input::placeholder {
  color: #b9bfc6;
}

.go {
  margin-right: 12px;
  color: #5b6b7d;
}

/* Field menu with its numbered marks, laid over the filters and table */
.menu {
  position: absolute;
  z-index: 2;
  top: 66px;
  left: 5px;
  display: flex;
  flex-direction: column;
  width: 201px;
  height: 287px;
  padding: 4px 0 7px;
  border-radius: 4px;
  background: #fff;
  box-shadow: 0 2px 8px rgba(0, 0, 0, 0.5);
  list-style: none;
}

.menu li {
  display: flex;
  flex: 1;
  align-items: center;
  gap: 9px;
  padding: 0 14px 0 13px;
  color: #6c7785;
  font-size: 15px;
  white-space: nowrap;
}

.menu span {
  color: #212529;
}

.menu .chosen {
  border-radius: 12px 0 0 12px;
  background: #eee;
  color: #212529;
}

.tick {
  margin-left: auto;
}

.marks {
  position: absolute;
  z-index: 3;
  top: 70px;
  left: 5px;
  display: flex;
  flex-direction: column;
  justify-content: space-between;
  width: 232px;
  height: 281px;
  pointer-events: none;
}

.mark {
  display: flex;
  justify-content: flex-end;
  height: 39px;
  border-radius: 12px;
  box-shadow: inset 0 0 0 3px #ff6352;
}

.mark b {
  width: 45px;
  border-radius: 12px;
  background: #000;
  color: #fff;
  font: 30px/39px Roboto, sans-serif;
  text-align: center;
}

/* Filters */
.filters {
  display: flex;
  align-items: center;
  gap: 27px;
  height: 33px;
  margin-top: 25px;
  padding-right: 27px;
}

.chip {
  gap: 6px;
  min-width: 100px;
  height: 27px;
  padding: 0 20px 0 19px;
  border: 1px solid #d5dce4;
  border-radius: 16px;
  font-size: 10px;
  font-weight: 500;
}

.chip.first {
  width: 226px;
}

.chip.large {
  height: 29px;
  font-size: 12px;
}

.add {
  gap: 8px;
  height: 33px;
  margin-left: auto;
  padding: 0 24px;
  border: 1px solid #d9dde2;
  border-radius: 17px;
  background: #f3f5f8;
  font-size: 14px;
  font-weight: 500;
}

.chip.relevance {
  margin-left: -7px;
  border-color: #d9dde2;
  background: #f3f5f8;
}

.pager {
  display: flex;
  justify-content: flex-end;
  gap: 8px;
  margin: 16px 0 6px;
}

.pager button {
  gap: 6px;
  height: 31px;
  padding: 0 15px;
  border-radius: 6px;
  background: #f8f9fb;
  color: #b0b5bd;
  font-size: 14px;
  font-weight: 500;
}

/* Table */
.table-wrap {
  position: relative;
  flex: 1;
  overflow: hidden;
}

table {
  width: 1822px;
  border-collapse: separate;
  border-spacing: 0;
  table-layout: fixed;
}

th {
  height: 48px;
  padding: 0 10px 0 27px;
  border-bottom: 2px solid #dee2e6;
  background: #f8f9fb;
  color: #5f6b78;
  font-size: 14px;
  font-weight: 600;
}

.th {
  display: flex;
  align-items: center;
  justify-content: space-between;
  white-space: nowrap;
}

.th svg {
  color: #b5bcc4;
}

td {
  height: 48px;
  padding: 0 26px 0 27px;
  border-bottom: 2px solid #f3f4f5;
  font-size: 15px;
  white-space: nowrap;
}

tr:last-child td {
  border-bottom-color: transparent;
}

td.name {
  padding-left: 9px;
}

td.dim {
  color: #6c757d;
}

td.small {
  color: #7a858f;
  font-size: 13px;
}

.person {
  display: flex;
  align-items: center;
  gap: 26px;
}

.avatar {
  width: 38px;
  height: 38px;
  border-radius: 50%;
  background: #d2d2d2;
  color: #fff;
  line-height: 38px;
  text-align: center;
}

.cell {
  display: flex;
  align-items: center;
  overflow: hidden;
}

.platform {
  display: flex;
  flex: none;
  align-items: center;
  gap: 7px;
  height: 29px;
  padding: 0 10px 0 9px;
  border-radius: 15px;
  background: #e3f2fd;
  color: #1976d2;
  font-size: 13px;
  font-weight: 500;
}

.platform.telegram {
  background: #e1f5fe;
  color: #0288d1;
}

.platform.linkedin {
  color: #0d47a1;
}

.platform.whatsapp {
  background: #e8f5e9;
  color: #43a847;
}

.answer {
  flex: none;
  padding: 0 9px;
  border-radius: 12px;
  background: #fff3cd;
  color: #856404;
  font-size: 13px;
  font-weight: 500;
  line-height: 24px;
}

.answer.yes {
  background: #e8f5e9;
  color: #4caf50;
}

.col-menu {
  position: absolute;
  top: 0;
  right: 0;
  justify-content: center;
  width: 54px;
  height: 48px;
  border: solid #dee2e6;
  border-width: 0 0 2px 1px;
  background: #f8f9fb;
  color: #495563;
}

.scrollbar {
  height: 2px;
  background: #ddd;
}

.scrollbar div {
  width: 90%;
  height: 100%;
  background: #555;
}

/* Floating widgets */
.progress-card {
  position: fixed;
  right: 27px;
  bottom: 27px;
  z-index: 4;
  display: flex;
  align-items: center;
  width: 113px;
  height: 62px;
  padding-left: 19px;
  border-radius: 16px;
  background: #ff9800;
  box-shadow: 0 3px 10px rgba(255, 152, 0, 0.4);
}

.progress-card span {
  width: 32px;
  height: 32px;
  border: 2px solid #ffad33;
  border-radius: 50%;
  color: #fff;
  font-size: 10px;
  font-weight: 800;
  line-height: 28px;
  text-align: center;
}

.chat-fab {
  position: fixed;
  right: 11px;
  bottom: 11px;
  z-index: 5;
  justify-content: center;
  width: 67px;
  height: 67px;
  border-radius: 50%;
  background: #ff6347;
  box-shadow: 0 1px 8px rgba(0, 0, 0, 0.3);
  color: #fff;
}
</style>
